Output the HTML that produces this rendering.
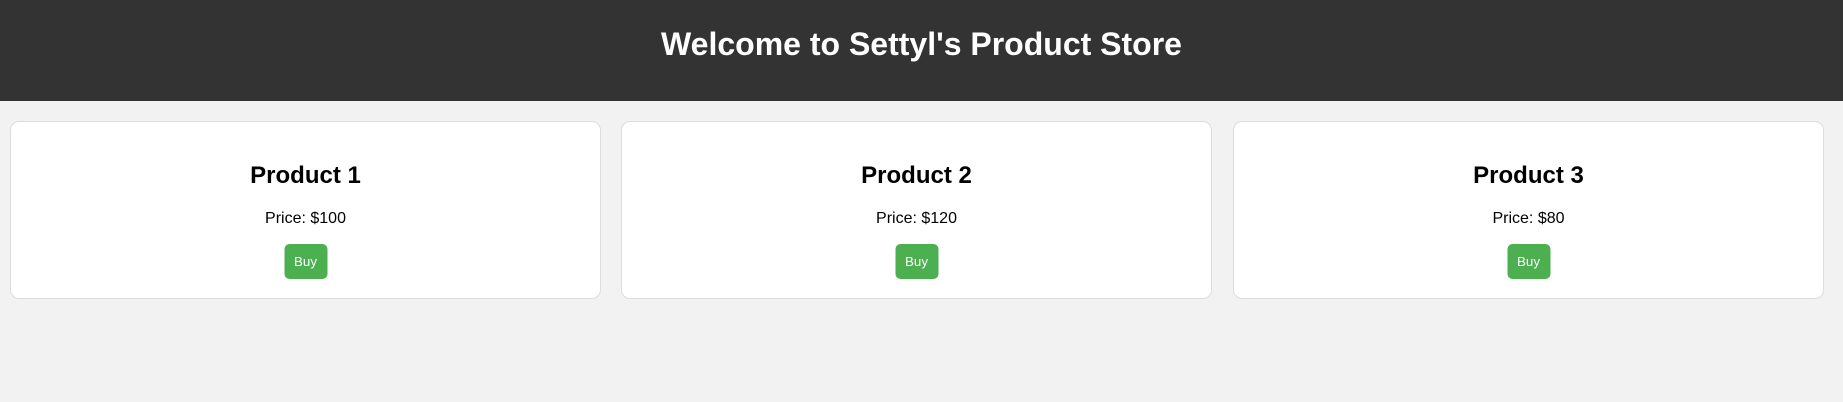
<!DOCTYPE html>
<html><head><style>
html,body{margin:0;padding:0;background:#f2f2f2;width:1843px;height:402px;overflow:hidden;font-family:"Liberation Sans",Arial,sans-serif;}
header{position:absolute;left:0;top:0;width:1843px;height:101px;background:#333;color:#fff;}
header h1{margin:0;position:absolute;width:100%;top:44px;transform:translateY(-50%);text-align:center;font-size:32px;line-height:40px;font-weight:bold;}
.card{position:absolute;top:121px;height:178px;width:591px;box-sizing:border-box;background:#fff;border:1px solid #ddd;border-radius:9px;text-align:center;}
.card h2{position:absolute;width:100%;margin:0;top:40px;font-size:24px;line-height:28px;}
.card p{position:absolute;width:100%;margin:0;top:87px;font-size:16px;line-height:20px;}
.card button{position:absolute;left:50%;transform:translateX(-50%);top:122px;width:43px;height:35px;background:#4caf50;color:#fff;border:none;border-radius:5px;font-family:"Liberation Sans",Arial,sans-serif;font-size:13.33px;padding:0;}
</style></head><body>
<header><h1>Welcome to Settyl's Product Store</h1></header>
<div class="card" style="left:10px"><h2>Product 1</h2><p>Price: $100</p><button>Buy</button></div>
<div class="card" style="left:621px"><h2>Product 2</h2><p>Price: $120</p><button>Buy</button></div>
<div class="card" style="left:1233px"><h2>Product 3</h2><p>Price: $80</p><button>Buy</button></div>
</body></html>
